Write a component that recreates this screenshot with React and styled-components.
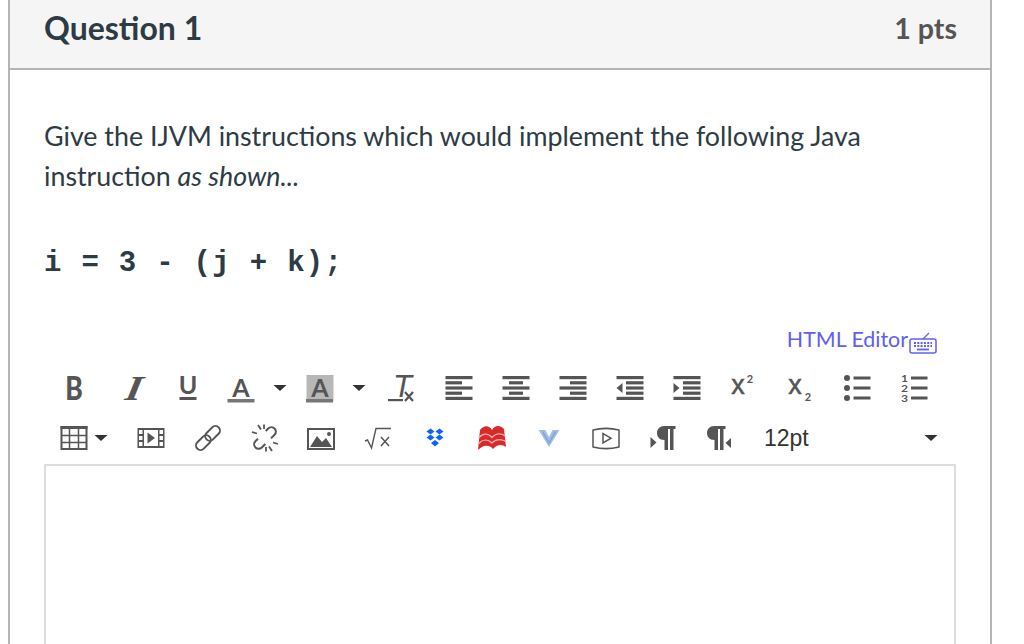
import React from 'react'
import styled, { createGlobalStyle } from 'styled-components'

const GREY = '#555'

const Text = styled.text`
  fill: ${GREY};
  font-family: ${p => p.$font || 'Lato'}, sans-serif;
  font-size: ${p => p.$size}px;
  font-weight: ${p => p.$weight || 400};
  font-style: ${p => p.$italic ? 'italic' : 'normal'};
  text-anchor: middle;
`

const Icon = ({ children, ...rest }) => (
  <Svg viewBox="0 0 32 32" {...rest}>{children}</Svg>
)

const Caret = () => <Icon><path d="M9.5 13H22.5L16 19Z" fill="#333" /></Icon>

const Bars = ({ short, indent }) => (
  <Icon>
    {[4, 9.2, 14.4, 19.6, 24.8].map((y, i) => {
      const isShort = i % 2 === 1
      if (indent) {
        const middle = i > 0 && i < 4
        return middle
          ? <rect key={y} x="12" y={y} width="17.5" height="3.2" fill={GREY} />
          : <rect key={y} x="2.5" y={y} width="27" height="3.2" fill={GREY} />
      }
      if (!isShort) return <rect key={y} x="2.5" y={y} width="27" height="3.2" fill={GREY} />
      if (short === 'l') return <rect key={y} x="2.5" y={y} width="16.5" height="3.2" fill={GREY} />
      if (short === 'c') return <rect key={y} x="9" y={y} width="14" height="3.2" fill={GREY} />
      return <rect key={y} x="13" y={y} width="16.5" height="3.2" fill={GREY} />
    })}
    {indent === 'l' && <path d="M8.5 11V21L2.5 16Z" fill={GREY} />}
    {indent === 'r' && <path d="M2.5 11V21L8.5 16Z" fill={GREY} />}
  </Icon>
)

const PILCROW = 'M17 4H28.5V7H26.5V28H23V7H21V28H17.5V18C12 18 10 14.5 10 11C10 7 13 4 17 4Z'

const Links = ({ broken }) => (
  <Icon>
    <g transform="rotate(-45 16 16)" fill="none" stroke={GREY} strokeWidth="2">
      {broken ? (
        <>
          <path d="M10.5 11.5H7a4.500 4.500 0 0 0 0 9H12" />
          <path d="M21.500 11.500H25a4.500 4.500 0 0 1 0 9H20" />
        </>
      ) : (
        <>
          <rect x="1" y="11.500" width="17" height="9" rx="4.500" />
          <rect x="14" y="11.500" width="17" height="9" rx="4.500" />
        </>
      )}
    </g>
    {broken && (
      <g stroke={GREY} strokeWidth="1.800">
        <path d="M9 3L12 7.500M15 2.500V7M3 10L8 11.500M23 29L20 24.500M17 29.500V25M29 22L24 20.500" />
      </g>
    )}
  </Icon>
)

const icons = {
  bold: (
    <Icon><Text $size={33} $weight={900} transform="translate(16 28) scale(.8 1)">B</Text></Icon>
  ),
  italic: (
    <Icon>
      <Text $size={35} $weight={700} $font="Liberation Serif" transform="translate(16 28) skewX(-22) scale(1.15 1)">I</Text>
    </Icon>
  ),
  underline: (
    <Icon>
      <Text x="16" y="22" $size={25} $weight={700}>U</Text>
      <rect x="7.500" y="25" width="17" height="3" fill={GREY} />
    </Icon>
  ),
  color: (
    <Icon>
      <Text x="16" y="25" $size={25} $weight={700}>A</Text>
      <rect x="2.500" y="27" width="27" height="3.500" fill="#777" />
    </Icon>
  ),
  background: (
    <Icon>
      <rect x="2.500" y="3" width="27" height="26" fill="#b7b7b7" />
      <Text x="16" y="25" $size={25} $weight={700}>A</Text>
      <rect x="2" y="27" width="27" height="3.500" fill="#777" />
    </Icon>
  ),
  clear: (
    <Icon>
      <Text x="17.500" y="25" $size={31} $italic $font="Liberation Sans">T</Text>
      <rect x="3" y="27" width="15" height="2.200" fill={GREY} />
      <path d="M20 20L28 29M28 20L20 29" stroke={GREY} strokeWidth="2.200" />
    </Icon>
  ),
  sup: (
    <Icon>
      <Text x="12" y="22" $size={27} $font="Liberation Sans" stroke={GREY} strokeWidth=".5">x</Text>
      <Text x="24" y="11" $size={11} $weight={700}>2</Text>
    </Icon>
  ),
  sub: (
    <Icon>
      <Text x="12" y="22" $size={27} $font="Liberation Sans" stroke={GREY} strokeWidth=".5">x</Text>
      <Text x="25" y="29" $size={11} $weight={700}>2</Text>
    </Icon>
  ),
  list: (
    <Icon>
      {[6, 16, 26].map(y => (
        <g key={y} fill={GREY}>
          <circle cx="6" cy={y} r="3" />
          <rect x="12.500" y={y - 1.500} width="17" height="3" />
        </g>
      ))}
    </Icon>
  ),
  ordered: (
    <Icon>
      {[['1', 6], ['2', 16], ['3', 26]].map(([n, y]) => (
        <g key={n}>
          <Text $size={10} $weight={700} transform={`translate(6.500 ${y + 3.500}) scale(1.200 1)`}>{n}</Text>
          <rect x="13" y={y - 1.500} width="16.500" height="3" fill={GREY} />
        </g>
      ))}
    </Icon>
  ),
  table: (
    <Icon>
      <rect x="3.500" y="5" width="25" height="22" fill="none" stroke={GREY} strokeWidth="2" />
      <rect x="2.500" y="4" width="27" height="3" fill={GREY} />
      <path d="M11.500 6V27M20.500 6V27M3 13.500H29M3 20.500H29" stroke={GREY} strokeWidth="1.500" />
    </Icon>
  ),
  film: (
    <Icon>
      <rect x="2.500" y="6" width="27" height="20" fill={GREY} />
      <rect x="9" y="8" width="14" height="16" fill="#fff" />
      {[8, 14, 20].map(y => (
        <g key={y} fill="#fff">
          <rect x="4" y={y} width="3.500" height="4" />
          <rect x="24.500" y={y} width="3.500" height="4" />
        </g>
      ))}
      <path d="M12.500 10.500V21.500L20 16Z" fill={GREY} />
    </Icon>
  ),
  link: <Links />,
  unlink: <Links broken />,
  image: (
    <Icon>
      <rect x="3" y="7" width="26" height="20" fill="none" stroke={GREY} strokeWidth="2" />
      <path d="M5 25L12 14L17 20L21 16L27 25Z" fill={GREY} />
      <circle cx="24" cy="12" r="2" fill={GREY} />
    </Icon>
  ),
  sqrt: (
    <Icon>
      <path d="M3 19L5.500 18L9.500 26L14 6.500H29" fill="none" stroke={GREY} strokeWidth="1.400" />
      <path d="M19 15L27 24M27 15L19 24" stroke={GREY} strokeWidth="1.500" />
    </Icon>
  ),
  dropbox: (
    <Icon>
      <g fill="#0f62ff">
        <path d="M11.500 6.500L15.500 9.500L11.500 12.500L7.500 9.500Z" />
        <path d="M20.500 6.500L24.500 9.500L20.500 12.500L16.500 9.500Z" />
        <path d="M11.500 12.500L15.500 15.500L11.500 18.500L7.500 15.500Z" />
        <path d="M20.500 12.500L24.500 15.500L20.500 18.500L16.500 15.500Z" />
        <path d="M16 18L20 21L16 24.500L12 21Z" />
      </g>
    </Icon>
  ),
  waves: (
    <Icon>
      <path d="M4 8C8 3 13 3 16 8C19 3 24 3 28 7L30 25C26 22 21 22 17 27C13 22 7 23 2 28Z" fill="#d92a2a" />
      <path d="M2.500 16C7 11 12 11 16 15.500C20 11 25 11 29.500 14M2.500 21.500C7 17 12 17 16 21C20 17 25 17 30 19.500" fill="none" stroke="#f3b4ac" strokeWidth="1.200" />
    </Icon>
  ),
  vimeo: (
    <Icon>
      <path d="M5.500 8H12.500L16 15L19.500 8H26.500L16 25Z" fill="#a3bde3" />
      <path d="M9.500 9.500L16 21L22.500 9.500" fill="none" stroke="#7c9fd3" strokeWidth="1.200" />
    </Icon>
  ),
  play: (
    <Icon>
      <path d="M3 8C11 6 21 6 29 8V25C21 27 11 27 3 25Z" fill="none" stroke={GREY} strokeWidth="1.500" strokeLinejoin="round" />
      <path d="M13 11.500V21L21 16.200Z" fill="none" stroke={GREY} strokeWidth="1.500" />
    </Icon>
  ),
  ltr: (
    <Icon>
      <path d="M3.500 15V26L9.500 20.500Z" fill={GREY} />
      <path d={PILCROW} fill={GREY} />
    </Icon>
  ),
  rtl: (
    <Icon>
      <path d={PILCROW} transform="translate(-6 0)" fill={GREY} />
      <path d="M28 16V26L22.500 21Z" fill={GREY} />
    </Icon>
  ),
}

const topRow = [
  ['bold', 13.5], ['italic', 24.5], ['underline', 25.5], ['color', 21], ['caret', 7],
  ['background', 8], ['caret', 7], ['clear', 10.5],
]

const alignRow = [
  [<Bars short="l" />, 25.5], [<Bars short="c" />, 25], [<Bars short="r" />, 25],
  [<Bars indent="l" />, 25], [<Bars indent="r" />, 25],
]

const topRowEnd = [['sup', 23.5], ['sub', 24.5], ['list', 26], ['ordered', 25.5]]

const bottomRow = [
  ['table', 13.5], ['caret', -5], ['film', 18], ['link', 25], ['unlink', 25], ['image', 24.5],
  ['sqrt', 25], ['dropbox', 25], ['waves', 25], ['vimeo', 24.5], ['play', 25], ['ltr', 25], ['rtl', 24.5],
]

const renderTool = ([name, gap], i) => (
  <Tool key={i} $gap={gap}>{name === 'caret' ? <Caret /> : icons[name]}</Tool>
)

const App = () => (
  <>
    <Global />
    <Panel>
      <Header>
        <Title>Question 1</Title>
        <Points>1 pts</Points>
      </Header>
      <Body>
        <Prompt>
          Give the IJVM instructions which would implement the following Java
          instruction <em>as shown...</em>
        </Prompt>
        <Code>i = 3 - (j + k);</Code>
        <EditorSwitch>
          <SwitchLink>HTML Editor</SwitchLink>
          <KeyboardIcon viewBox="0 0 28 24">
            <path d="M14 9L20 3" stroke="#6060f0" strokeWidth="1.200" fill="none" />
            <rect x="1" y="9" width="26" height="14" rx="2" fill="none" stroke="#6060f0" strokeWidth="1.500" />
            <path d="M5 13H23M5 16H23" stroke="#6060f0" strokeWidth="1.800" strokeDasharray="2 1.300" />
            <path d="M8 19.500H20" stroke="#6060f0" strokeWidth="1.800" />
          </KeyboardIcon>
        </EditorSwitch>
        <ToolRow $first>
          {topRow.map(renderTool)}
          {alignRow.map(([bars, gap], i) => <Tool key={i} $gap={gap}>{bars}</Tool>)}
          {topRowEnd.map(renderTool)}
        </ToolRow>
        <ToolRow>
          {bottomRow.map(renderTool)}
          <FontSelect>
            12pt
            <Tool><Caret /></Tool>
          </FontSelect>
        </ToolRow>
        <EditorBox />
      </Body>
    </Panel>
  </>
)

const Global = createGlobalStyle`
  html, body {
    margin: 0;
    height: 644px;
    overflow: hidden;
    background: #fff;
  }
`
const Panel = styled.div`
  width: 980px;
  margin-left: 8px;
  height: 644px;
  border-left: 2px solid #b4b4b4;
  border-right: 2px solid #b4b4b4;
  font-family: Lato, sans-serif;
  color: #2d3b45;
  overflow: hidden;
`
const Header = styled.div`
  height: 68px;
  padding: 0 34px;
  display: flex;
  justify-content: space-between;
  align-items: center;
  background: #f5f5f5;
  border-bottom: 2px solid #b4b4b4;
`
const Title = styled.div`
  font-size: 32px;
  font-weight: 700;
  position: relative;
  top: -7px;
`
const Points = styled.div`
  font-size: 28.6px;
  font-weight: 700;
  color: #555;
  position: relative;
  top: -6px;
  left: 1px;
`
const Body = styled.div`
  padding: 46px 34px 0;
`
const Prompt = styled.div`
  font-size: 26.8px;
  line-height: 40px;
  em {
    font-style: italic;
  }
`
const Code = styled.div`
  margin-top: 48px;
  font-family: "Liberation Mono", monospace;
  font-weight: 700;
  font-size: 29px;
  line-height: 40px;
  letter-spacing: 1.3px;
`
const EditorSwitch = styled.div`
  margin-top: 40px;
  height: 30px;
  display: flex;
  justify-content: flex-end;
  align-items: center;
  padding-right: 19px;
`
const SwitchLink = styled.span`
  font-size: 21.4px;
  color: #6060f0;
`
const KeyboardIcon = styled.svg`
  width: 28px;
  height: 24px;
  margin-left: 1px;
  margin-top: 6px;
`
const ToolRow = styled.div`
  height: 50px;
  display: flex;
  align-items: center;
  margin-top: ${p => p.$first ? 9 : 0}px;
`
const Tool = styled.div`
  flex: none;
  width: 32px;
  height: 32px;
  margin-left: ${p => p.$gap || 0}px;
`
const Svg = styled.svg`
  display: block;
  width: 32px;
  height: 32px;
  overflow: visible;
`
const FontSelect = styled.div`
  flex: 1;
  margin-left: 29px;
  padding-right: 9.5px;
  display: flex;
  justify-content: space-between;
  align-items: center;
  font-family: "Liberation Sans", sans-serif;
  font-size: 23px;
  color: #333;
`
const EditorBox = styled.div`
  margin-top: 1px;
  height: 300px;
  border: 2px solid #ddd;
`

export default App
